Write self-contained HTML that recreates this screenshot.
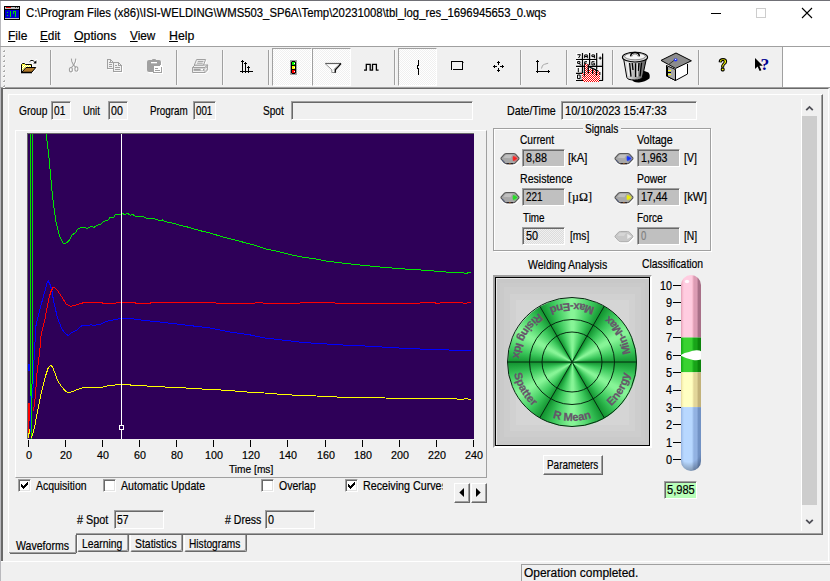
<!DOCTYPE html>
<html><head><meta charset="utf-8">
<style>
*{box-sizing:border-box;margin:0;padding:0}
html,body{width:830px;height:581px;overflow:hidden;background:#f0f0f0;font-family:"Liberation Sans",sans-serif;color:#000}
.a{position:absolute}
.t{position:absolute;white-space:nowrap;transform-origin:0 50%;color:#000;-webkit-text-stroke-width:0.2px}
.t u{text-decoration:underline;text-underline-offset:1px}
/* sunken edit box: outer dark/gray top-left, white bottom-right */
.sk{position:absolute;background:#f0f0f0;border:1px solid;border-color:#a0a0a0 #fff #fff #a0a0a0;box-shadow:inset 1px 1px 0 #696969}
.vs{position:absolute;width:2px;top:50px;height:36px;border-left:1px solid #a0a0a0;border-right:1px solid #fff}
.chk{position:absolute;width:13px;height:13px;background:#fff;border:1px solid;border-color:#a0a0a0 #fff #fff #a0a0a0;box-shadow:inset 1px 1px 0 #696969,inset -1px -1px 0 #e3e3e3}
.btn{position:absolute;background:#f0f0f0;border:1px solid;border-color:#fff #696969 #696969 #fff;box-shadow:inset -1px -1px 0 #a0a0a0}
.tab{position:absolute;background:#f0f0f0;border:1px solid;border-color:#f0f0f0 #696969 #696969 #fff;border-top:0;border-radius:0 0 2px 2px;box-shadow:inset -1px -1px 0 #a0a0a0}
.hatch{position:absolute;background:repeating-conic-gradient(#fff 0 25%,#f0f0f0 0 50%) 0 0/2px 2px;border:1px solid;border-color:#a0a0a0 #fff #fff #a0a0a0}
</style></head><body>
<!-- ===== title bar ===== -->
<div class="a" style="left:0;top:0;width:830px;height:46px;background:#fff"></div>
<div class="a" style="left:0;top:0;width:830px;height:1px;background:#707076"></div>
<div class="a" style="left:0;top:1px;width:1px;height:580px;background:#b9b9bd"></div>
<!-- app icon -->
<svg class="a" style="left:4px;top:6px" width="16" height="14" viewBox="0 0 16 14" shape-rendering="crispEdges">
<rect x="0" y="0" width="16" height="14" fill="#000"/><rect x="1" y="1" width="14" height="2" fill="#c0c0c0"/><rect x="2" y="1" width="5" height="1" fill="#e00000"/><rect x="11" y="1" width="1" height="1" fill="#404040"/><rect x="13" y="1" width="1" height="1" fill="#404040"/>
<rect x="1" y="4" width="14" height="8" fill="#0000d0"/><rect x="1" y="12" width="14" height="1" fill="#c0c0c0"/>
<rect x="3" y="6" width="1" height="1" fill="#00e000"/><rect x="3" y="9" width="1" height="1" fill="#00e000"/><rect x="6" y="5" width="1" height="6" fill="#00e000"/><rect x="9" y="5" width="3" height="1" fill="#00e000"/><rect x="11" y="5" width="1" height="6" fill="#00e000"/><rect x="9" y="6" width="1" height="2" fill="#00e000"/>
</svg>
<!-- caption buttons -->
<div class="a" style="left:711px;top:13px;width:10px;height:1px;background:#000"></div>
<div class="a" style="left:756px;top:8px;width:10px;height:10px;border:1px solid #cdcdcd"></div>
<svg class="a" style="left:801px;top:7px" width="12" height="12" viewBox="0 0 12 12"><path d="M1 1 L11 11 M11 1 L1 11" stroke="#000" stroke-width="1.1" fill="none"/></svg>
<div class="a" style="left:0;top:46px;width:830px;height:1px;background:#a0a0a0"></div>
<!-- ===== toolbar ===== -->
<div class="a" style="left:1px;top:47px;width:782px;height:40px;background:#f0f0f0"></div>
<div class="a" style="left:783px;top:47px;width:47px;height:40px;background:#fff"></div>
<div class="a" style="left:782px;top:47px;width:1px;height:40px;background:#a0a0a0"></div>
<div class="a" style="left:0;top:87px;width:830px;height:1px;background:#a0a0a0"></div>
<!--TB0-->
<svg class="a" style="left:2px;top:49px" width="5" height="40" viewBox="0 0 5 40" shape-rendering="crispEdges"><rect x="2" y="1" width="1" height="1" fill="#b4b4b4"/><rect x="1" y="2" width="2" height="1" fill="#a8a8a8"/><rect x="3" y="2" width="1" height="1" fill="#fafafa"/><rect x="1" y="3" width="2" height="1" fill="#fafafa"/><rect x="2" y="6" width="1" height="1" fill="#b4b4b4"/><rect x="1" y="7" width="2" height="1" fill="#a8a8a8"/><rect x="3" y="7" width="1" height="1" fill="#fafafa"/><rect x="1" y="8" width="2" height="1" fill="#fafafa"/><rect x="2" y="11" width="1" height="1" fill="#b4b4b4"/><rect x="1" y="12" width="2" height="1" fill="#a8a8a8"/><rect x="3" y="12" width="1" height="1" fill="#fafafa"/><rect x="1" y="13" width="2" height="1" fill="#fafafa"/><rect x="2" y="16" width="1" height="1" fill="#b4b4b4"/><rect x="1" y="17" width="2" height="1" fill="#a8a8a8"/><rect x="3" y="17" width="1" height="1" fill="#fafafa"/><rect x="1" y="18" width="2" height="1" fill="#fafafa"/><rect x="2" y="21" width="1" height="1" fill="#b4b4b4"/><rect x="1" y="22" width="2" height="1" fill="#a8a8a8"/><rect x="3" y="22" width="1" height="1" fill="#fafafa"/><rect x="1" y="23" width="2" height="1" fill="#fafafa"/><rect x="2" y="26" width="1" height="1" fill="#b4b4b4"/><rect x="1" y="27" width="2" height="1" fill="#a8a8a8"/><rect x="3" y="27" width="1" height="1" fill="#fafafa"/><rect x="1" y="28" width="2" height="1" fill="#fafafa"/><rect x="2" y="31" width="1" height="1" fill="#b4b4b4"/><rect x="1" y="32" width="2" height="1" fill="#a8a8a8"/><rect x="3" y="32" width="1" height="1" fill="#fafafa"/><rect x="1" y="33" width="2" height="1" fill="#fafafa"/><rect x="2" y="36" width="1" height="1" fill="#b4b4b4"/><rect x="1" y="37" width="2" height="1" fill="#a8a8a8"/><rect x="3" y="37" width="1" height="1" fill="#fafafa"/><rect x="1" y="38" width="2" height="1" fill="#fafafa"/></svg>
<div class="a" style="left:50px;top:50px;width:1px;height:35px;background:#a0a0a0"></div><div class="a" style="left:51px;top:50px;width:1px;height:35px;background:#f8f8f8"></div>
<div class="a" style="left:176px;top:50px;width:1px;height:35px;background:#a0a0a0"></div><div class="a" style="left:177px;top:50px;width:1px;height:35px;background:#f8f8f8"></div>
<div class="a" style="left:222px;top:50px;width:1px;height:35px;background:#a0a0a0"></div><div class="a" style="left:223px;top:50px;width:1px;height:35px;background:#f8f8f8"></div>
<div class="a" style="left:268px;top:50px;width:1px;height:35px;background:#a0a0a0"></div><div class="a" style="left:269px;top:50px;width:1px;height:35px;background:#f8f8f8"></div>
<div class="a" style="left:394px;top:50px;width:1px;height:35px;background:#a0a0a0"></div><div class="a" style="left:395px;top:50px;width:1px;height:35px;background:#f8f8f8"></div>
<div class="a" style="left:520px;top:50px;width:1px;height:35px;background:#a0a0a0"></div><div class="a" style="left:521px;top:50px;width:1px;height:35px;background:#f8f8f8"></div>
<div class="a" style="left:566px;top:50px;width:1px;height:35px;background:#a0a0a0"></div><div class="a" style="left:567px;top:50px;width:1px;height:35px;background:#f8f8f8"></div>
<div class="a" style="left:612px;top:50px;width:1px;height:35px;background:#a0a0a0"></div><div class="a" style="left:613px;top:50px;width:1px;height:35px;background:#f8f8f8"></div>
<div class="a" style="left:698px;top:50px;width:1px;height:35px;background:#a0a0a0"></div><div class="a" style="left:699px;top:50px;width:1px;height:35px;background:#f8f8f8"></div>
<div class="hatch" style="left:272px;top:48px;width:40px;height:38px"></div>
<div class="hatch" style="left:312px;top:48px;width:39px;height:38px"></div>
<div class="hatch" style="left:398px;top:48px;width:39px;height:38px"></div>
<svg class="a" style="left:20px;top:58px" width="18" height="16" viewBox="-1 -1 18 16">
<g stroke="#fff" stroke-width="2" fill="#fff" stroke-linejoin="round"><path d="M0.5 13.5V5.5L1.5 4.5H3.5L4.5 5.5H10.5V8.5H15.5L11 13.5Z"/><path d="M8.5 2.5Q11 -0.5 14 3.5"/><path d="M12 4.5h3.5v-3.5z"/></g>
<path d="M0.5 13.5V5.5L1.5 4.5H3.5L4.5 5.5H10.5V8.5" fill="#ffff30" stroke="#000" stroke-width="1"/>
<path d="M1 6h9v2.5H4.8L1 12.6Z" fill="#ffff30"/>
<g fill="#fff" shape-rendering="crispEdges"><rect x="2" y="6" width="1" height="1"/><rect x="4" y="6" width="1" height="1"/><rect x="6" y="6" width="1" height="1"/><rect x="8" y="6" width="1" height="1"/><rect x="1" y="7" width="1" height="1"/><rect x="3" y="7" width="1" height="1"/><rect x="5" y="7" width="1" height="1"/><rect x="7" y="7" width="1" height="1"/><rect x="9" y="7" width="1" height="1"/><rect x="2" y="8" width="1" height="1"/><rect x="4" y="8" width="1" height="1"/><rect x="1" y="9" width="1" height="1"/><rect x="3" y="9" width="1" height="1"/><rect x="2" y="10" width="1" height="1"/><rect x="1" y="11" width="1" height="1"/></g>
<path d="M0.5 13.5L5 8.5H14.8L10.6 13.5Z" fill="#b07828" stroke="#000" stroke-width="1" stroke-linejoin="miter"/>
<path d="M0 13.5H11" stroke="#000" stroke-width="1.6"/>
<path d="M8.6 2.6Q11 -0.2 13.8 3.2" fill="none" stroke="#000" stroke-width="1"/>
<path d="M12.2 4.5h3.2v-3.3z" fill="#000"/>
</svg>
<svg class="a" style="left:68px;top:58px" width="12" height="16" viewBox="0 0 12 16"><g transform="translate(1.6,1.2)" fill="none" stroke="#fff" stroke-width="1.1"><path d="M2.6 0.3 L3 3 L4.6 6.6 L7 9 M7 0.3 L6.6 3 L5 6.6 L2.6 9.2"/><ellipse cx="2.1" cy="11.3" rx="1.5" ry="2.2"/><ellipse cx="7.6" cy="10.6" rx="1.5" ry="2.2"/></g><g transform="translate(0.8,0.4)" fill="none" stroke="#a0a0a0" stroke-width="1.1"><path d="M2.6 0.3 L3 3 L4.6 6.6 L7 9 M7 0.3 L6.6 3 L5 6.6 L2.6 9.2"/><ellipse cx="2.1" cy="11.3" rx="1.5" ry="2.2"/><ellipse cx="7.6" cy="10.6" rx="1.5" ry="2.2"/></g></svg>
<svg class="a" style="left:107px;top:59px" width="17" height="15" viewBox="0 0 17 15" shape-rendering="crispEdges">
<g transform="translate(1,1)"><path d="M0.5 0.5h3l3 3v6h-6z" fill="none" stroke="#fff" stroke-width="1"/><path d="M3.5 0.5v3h3" fill="none" stroke="#fff" stroke-width="1"/><path d="M6.5 3.5h5l3 3v6h-8z" fill="none" stroke="#fff" stroke-width="1"/><path d="M11.5 3.5v3h3" fill="none" stroke="#fff" stroke-width="1"/></g>
<path d="M0.5 0.5h3l3 3v6h-6z" fill="#f0f0f0" stroke="#a0a0a0" stroke-width="1"/><path d="M3.5 0.5v3h3" fill="none" stroke="#a0a0a0" stroke-width="1"/><rect x="2" y="3" width="2" height="1" fill="#a0a0a0"/><rect x="2" y="5" width="3" height="1" fill="#a0a0a0"/><rect x="2" y="7" width="3" height="1" fill="#a0a0a0"/>
<path d="M6.5 3.5h5l3 3v6h-8z" fill="#f0f0f0" stroke="#a0a0a0" stroke-width="1"/><path d="M11.5 3.5v3h3" fill="none" stroke="#a0a0a0" stroke-width="1"/><rect x="8" y="6" width="2" height="1" fill="#a0a0a0"/><rect x="8" y="8" width="5" height="1" fill="#a0a0a0"/><rect x="8" y="10" width="5" height="1" fill="#a0a0a0"/>
</svg>
<svg class="a" style="left:147px;top:59px" width="17" height="15" viewBox="0 0 17 15">
<rect x="1" y="2" width="14" height="12.4" rx="2" fill="#fff"/>
<rect x="0" y="1" width="14" height="12" rx="2" fill="#a0a0a0"/><rect x="5" y="0" width="4" height="2" rx="1" fill="#a0a0a0"/>
<rect x="4" y="3" width="6" height="1.3" fill="#fff"/>
<g shape-rendering="crispEdges"><rect x="7" y="7" width="9" height="8" fill="#fff"/><rect x="6" y="6" width="9" height="8" fill="#a0a0a0"/><rect x="7" y="7" width="7" height="6" fill="#fff"/><rect x="13" y="6" width="2" height="2" fill="#fff"/><rect x="8" y="9" width="3" height="1" fill="#a0a0a0"/><rect x="8" y="11" width="5" height="1" fill="#a0a0a0"/></g>
</svg>
<svg class="a" style="left:191px;top:58px" width="19" height="17" viewBox="0 0 19 17">
<g transform="translate(1,1)" fill="none" stroke="#fff" stroke-width="1"><path d="M5.5 1.5h9l-2 5.2"/><path d="M1.5 14.5h12.5l2.6-2.8v-4.6"/></g>
<path d="M1.5 9.5L4 7H16.6L14 9.5Z" fill="#f0f0f0" stroke="#a0a0a0" stroke-width="1"/>
<path d="M5.6 1.5h9l-2.1 5.6h-9.2z" fill="#f0f0f0" stroke="#a0a0a0" stroke-width="1"/>
<path d="M6.8 3.4h5.6M6.1 5.2h5.6" stroke="#a0a0a0" stroke-width="1"/>
<path d="M1.5 9.5h12.5v5h-12.5z" fill="#f0f0f0" stroke="#a0a0a0" stroke-width="1"/>
<path d="M14 9.5L16.6 7V11.8L14 14.5" fill="#f0f0f0" stroke="#a0a0a0" stroke-width="1"/>
<rect x="2.6" y="10.6" width="10.4" height="2.2" fill="#a0a0a0"/>
<rect x="9.6" y="10.9" width="2.4" height="1.5" fill="#fff"/>
<path d="M14.8 10.4l1.4-1.4M14.8 12.6l1.4-1.4" stroke="#a0a0a0" stroke-width="0.9"/>
</svg>
<svg class="a" style="left:239px;top:59px" width="16" height="15" viewBox="0 0 16 15" shape-rendering="crispEdges" fill="#000">
<rect x="1" y="12" width="13" height="1"/>
<rect x="3" y="1" width="1" height="13"/><rect x="2" y="2" width="3" height="1"/>
<rect x="6" y="3" width="1" height="11"/><rect x="5" y="4" width="3" height="1"/>
<rect x="9" y="7" width="1" height="7"/><rect x="8" y="8" width="3" height="1"/>
</svg>
<svg class="a" style="left:290px;top:60px" width="7" height="15" viewBox="0 0 7 15" shape-rendering="crispEdges">
<rect x="0" y="0" width="7" height="15" fill="#a4a4a4"/><rect x="1" y="1" width="5" height="13" fill="#000"/>
<rect x="1" y="1" width="1" height="1" fill="#808080"/><rect x="5" y="1" width="1" height="1" fill="#808080"/><rect x="1" y="13" width="1" height="1" fill="#808080"/><rect x="5" y="13" width="1" height="1" fill="#808080"/>
<rect x="2" y="2" width="3" height="3" fill="#00f000"/><rect x="2" y="6" width="3" height="3" fill="#ffff00"/><rect x="2" y="10" width="3" height="3" fill="#ff0000"/>
<rect x="4" y="3" width="1" height="1" fill="#fff"/><rect x="4" y="7" width="1" height="1" fill="#fff"/><rect x="4" y="11" width="1" height="1" fill="#fff"/>
</svg>
<svg class="a" style="left:324px;top:62px" width="19" height="12" viewBox="0 0 19 12">
<path d="M1 1.5H17L11.5 7.6V10.6H7.8V7.6Z" fill="#fff"/>
<path d="M1 1.5H17" stroke="#606060" stroke-width="1.2"/>
<path d="M1.2 1.6L7.8 7.8V10.5H11" stroke="#909090" stroke-width="1" fill="none"/>
<path d="M17 1.6L11.3 7.8V10.8" stroke="#101010" stroke-width="1.5" fill="none"/>
<path d="M14.6 3.2L9.6 7.6" stroke="#a0a0a0" stroke-width="1"/>
</svg>
<svg class="a" style="left:363px;top:62px" width="17" height="10" viewBox="0 0 17 10">
<path d="M1 8.2H3.3V2.3H7.2V8.2H9.5V2.3H13.4V8.2H15.6" fill="none" stroke="#000" stroke-width="1.3"/></svg>
<svg class="a" style="left:415px;top:60px" width="6" height="15" viewBox="0 0 6 15" shape-rendering="crispEdges" fill="#000">
<rect x="3" y="0" width="1" height="6"/><rect x="2" y="5" width="1" height="4"/><rect x="3" y="8" width="1" height="7"/></svg>
<svg class="a" style="left:451px;top:61px" width="13" height="10" viewBox="0 0 13 10" shape-rendering="crispEdges" fill="#000">
<rect x="0" y="0" width="12" height="1"/><rect x="0" y="0" width="1" height="9"/><rect x="11" y="0" width="1" height="9"/><rect x="2" y="8" width="10" height="1"/><rect x="12" y="1" width="1" height="1" fill="#808080"/></svg>
<svg class="a" style="left:493px;top:61px" width="11" height="11" viewBox="0 0 11 11" shape-rendering="crispEdges" fill="#000">
<rect x="5" y="0" width="1" height="4"/><rect x="4" y="1" width="3" height="1"/>
<rect x="5" y="7" width="1" height="4"/><rect x="4" y="9" width="3" height="1"/>
<rect x="0" y="5" width="4" height="1"/><rect x="1" y="4" width="1" height="3"/>
<rect x="7" y="5" width="4" height="1"/><rect x="9" y="4" width="1" height="3"/>
</svg>
<svg class="a" style="left:535px;top:59px" width="16" height="15" viewBox="0 0 16 15">
<g shape-rendering="crispEdges" fill="#000"><rect x="2" y="1" width="1" height="13"/><rect x="1" y="2" width="3" height="1"/><rect x="1" y="12" width="14" height="1"/><rect x="13" y="11" width="1" height="3"/></g>
<path d="M6.5 9.5Q7 5.5 9.5 5.3L13.2 4.2" fill="none" stroke="#a8a8a8" stroke-width="1"/>
</svg>
<svg class="a" style="left:576px;top:53px" width="28" height="29" viewBox="0 0 28 29">
<defs><pattern id="rd" width="2" height="2" patternUnits="userSpaceOnUse"><rect width="2" height="2" fill="#fff"/><rect width="1" height="1" fill="#f00"/><rect x="1" y="1" width="1" height="1" fill="#f00"/></pattern>
<linearGradient id="kg" x1="0" y1="0" x2="1" y2="1"><stop offset="0" stop-color="#fff"/><stop offset="0.6" stop-color="#f4f4f4"/><stop offset="1" stop-color="#c8c8c8"/></linearGradient></defs>
<rect x="0" y="0" width="27" height="28" fill="#f6f6f6"/>
<g fill="url(#kg)"><rect x="0" y="0" width="6" height="6"/><rect x="7" y="0" width="6" height="6"/><rect x="14" y="0" width="6" height="6"/><rect x="0" y="7" width="6" height="6"/><rect x="7" y="7" width="6" height="6"/><rect x="14" y="7" width="6" height="6"/><rect x="0" y="14" width="6" height="6"/><rect x="0" y="21" width="6" height="6"/><rect x="21" y="0" width="5.5" height="13"/><rect x="21" y="14" width="5.5" height="13"/></g>
<g stroke="#000" stroke-width="1.2" fill="none"><path d="M0 6.5H20.6M0 13.4H27M0 20.3H8M0 27.5H27M6.5 0V27.5M13.6 0V12M20.7 0V16M26.6 0.4V27.5"/></g>
<g stroke="#000" stroke-width="1" fill="none" stroke-linejoin="miter"><path d="M1.4 1.7H4.4L2.6 5"/><path d="M8.7 5.2V1.9H11.3V5.2M8.7 3.5H11.3"/><path d="M18.4 5.2V1.9H15.9V3.6H18.4"/><path d="M1.6 8.6H3.9V10.4H1.6ZM3 10.4L4.8 12"/><path d="M11 8.7H8.7V12M8.7 10.3H10.6"/><path d="M18.5 8.7H15.9V11.9H18.5V10.3H17.2"/><path d="M2.3 15V19.2"/><path d="M1.5 22H4.1V25.6H1.5Z"/><path d="M24.2 3.6V6.6M22.7 5.1H25.7"/></g>
<path d="M8.5 12Q8.6 11 10.2 11Q11.8 11 11.9 12V15.6H15.6Q16.4 15.8 16.6 16.5H19.6Q20.2 16.9 20.4 17.9H22.8Q23.8 18.2 23.9 19.4V26L23 28.7H7L6 26V21.4Q6.3 20.2 7.4 20.2H8.5Z" fill="url(#rd)" shape-rendering="crispEdges"/>
<g stroke="#000" fill="none"><path d="M8.4 12V23.4" stroke-width="1"/><path d="M12.3 11.4V20.4" stroke-width="1.3"/><path d="M16.6 16.5V21" stroke-width="1.2"/><path d="M20.4 16.4V22.6" stroke-width="1.2"/><path d="M13.4 14.2L16.4 15.4L22.2 17.8" stroke-width="1.4"/><path d="M23.9 19V22" stroke-width="1"/></g>
</svg>
<svg class="a" style="left:621px;top:50px" width="30" height="33" viewBox="0 0 30 33">
<defs><linearGradient id="tg" x1="0" x2="1"><stop offset="0" stop-color="#e8e8e8"/><stop offset="0.35" stop-color="#c8c8c8"/><stop offset="0.7" stop-color="#8a8a8a"/><stop offset="1" stop-color="#5a5a5a"/></linearGradient></defs>
<path d="M11 29.5Q12 32.6 18 32.4Q24 32 28.4 28.4Q29.4 24.6 27.4 22.4L22 20.5Z" fill="#000"/>
<path d="M2.6 8.6L5.8 27.4Q6.4 30 13.4 30Q20.4 30 21.4 27.2L25.4 8.6Z" fill="url(#tg)" stroke="#000" stroke-width="1"/>
<g stroke="#000" stroke-width="1.3" fill="none"><path d="M8.6 13L10 26.6M11.2 13L12 20M14.6 13.2L14.6 27M18 13L17.2 21M20.6 12.6L19 26.4"/></g>
<g stroke="#fff" stroke-width="0.9" fill="none"><path d="M6.4 12.4L8 26M16.2 13.2V26.6"/></g>
<ellipse cx="14" cy="7.2" rx="12.6" ry="4.8" fill="#dcdcdc" stroke="#000" stroke-width="1.1"/>
<ellipse cx="14" cy="6.4" rx="10.4" ry="3.4" fill="#f6f6f6" stroke="#606060" stroke-width="0.7"/>
<path d="M9.6 6.4Q10 2.6 14 2.6Q18 2.6 18.4 6.4" fill="none" stroke="#000" stroke-width="1.5"/>
<path d="M11 6.4Q11.4 4 14 4Q16.6 4 17 6.4" fill="none" stroke="#909090" stroke-width="0.9"/>
</svg>
<svg class="a" style="left:660px;top:52px" width="33" height="30" viewBox="0 0 33 30">
<path d="M6.5 13.5V24L15.5 28.5L27.5 22V12" fill="#fff" stroke="#000" stroke-width="1"/>
<path d="M6.5 13.5V24L15.5 28.5V17.5Z" fill="#a8a8a8" stroke="#000" stroke-width="1"/>
<path d="M15.5 17.5V28.5" stroke="#000" stroke-width="1"/>
<path d="M1 8.4L16 1L31.4 8.8L15.6 16.4Z" fill="#8c8c8c" stroke="#000" stroke-width="1" stroke-linejoin="round"/>
<path d="M8 13L14.6 8" stroke="#303030" stroke-width="1"/>
<ellipse cx="15.6" cy="8" rx="1.9" ry="1.4" fill="#2030ff"/><rect x="15" y="7" width="1.2" height="0.9" fill="#fff"/>
<g shape-rendering="crispEdges"><rect x="7" y="15" width="1" height="9" fill="#000"/><rect x="8" y="18" width="3" height="1" fill="#ffff00"/><rect x="8" y="20" width="3" height="1" fill="#000"/><rect x="8" y="22" width="3" height="1" fill="#ffff00"/></g>
</svg>
<svg class="a" style="left:717px;top:57px" width="12" height="16" viewBox="0 0 12 16">
<path d="M2.2 4.8Q2.4 1.6 6 1.6Q9.6 1.6 9.6 4.6Q9.6 6.4 7.6 7.6Q6.6 8.4 6.6 10.2H4.6Q4.4 8 5.8 6.8Q7.2 5.8 7.2 4.6Q7.2 3.4 6 3.4Q4.6 3.4 4.4 5Z" fill="#ffff00" stroke="#000" stroke-width="1.1" stroke-linejoin="round"/>
<rect x="4.3" y="11.3" width="2.8" height="2.6" rx="0.8" fill="#ffff00" stroke="#000" stroke-width="1.1"/>
</svg>
<svg class="a" style="left:754px;top:57px" width="18" height="16" viewBox="0 0 18 16">
<path d="M1 1V12L3.6 9.6L5.6 14L7.4 13.2L5.4 8.8H8.8Z" fill="#000"/>
<text x="6.6" y="13" font-family="Liberation Serif, serif" font-weight="bold" font-size="17.5" fill="#000090">?</text>
</svg>
<!--TB1-->
<!-- ===== client area ===== -->
<div class="a" style="left:1px;top:88px;width:828px;height:473px;background:#f0f0f0;border-left:2px solid #696969;border-top:1px solid #696969;border-right:1px solid #fff"></div>
<!-- tab page frame -->
<div class="a" style="left:8px;top:94px;width:815px;height:441px;border:1px solid;border-color:#fff #696969 #696969 #fff;box-shadow:inset -1px -1px 0 #a0a0a0"></div>
<!-- scrollbar -->
<div class="a" style="left:801px;top:99px;width:1px;height:432px;background:#fff"></div>
<div class="a" style="left:802px;top:116px;width:15px;height:389px;background:#cdcdcd"></div>
<svg class="a" style="left:805px;top:104px" width="9" height="8" viewBox="0 0 9 8"><path d="M1.2 6.2 L4.5 2.9 L7.8 6.2" stroke="#505058" stroke-width="1.8" fill="none"/></svg>
<svg class="a" style="left:805px;top:518px" width="9" height="8" viewBox="0 0 9 8"><path d="M1.2 1.8 L4.5 5.1 L7.8 1.8" stroke="#505058" stroke-width="1.8" fill="none"/></svg>
<!-- fields row -->
<div class="sk" style="left:51px;top:101px;width:20px;height:19px"></div>
<div class="sk" style="left:108px;top:101px;width:20px;height:19px"></div>
<div class="sk" style="left:193px;top:101px;width:23px;height:19px"></div>
<div class="sk" style="left:291px;top:101px;width:182px;height:19px"></div>
<div class="sk" style="left:561px;top:101px;width:136px;height:19px"></div>
<!-- chart -->
<div class="a" style="left:15px;top:130px;width:472px;height:348px;border:1px solid;border-color:#fff #a0a0a0 #a0a0a0 #fff"></div>
<div class="a" style="left:27px;top:133px;width:447px;height:306px;background:#696969"></div>
<svg class="a" style="left:28px;top:134px;background:#2e0058" width="446" height="305" viewBox="0 0 446 305">
<g shape-rendering="crispEdges"><rect x="2" y="0" width="1" height="250" fill="#00e000"/><rect x="4" y="0" width="1" height="250" fill="#00e000"/><rect x="2" y="250" width="2" height="16" fill="#00e000"/><rect x="3" y="262" width="1" height="43" fill="#00e000"/>
<rect x="0" y="230" width="2" height="7" fill="#0000ff"/><rect x="2" y="262" width="1" height="36" fill="#0000ff"/>
<rect x="0" y="269" width="1" height="30" fill="#ff0000"/><rect x="1" y="269" width="1" height="18" fill="#ff0000"/><rect x="0" y="299" width="1" height="5" fill="#ffff00"/><rect x="1" y="295" width="1" height="5" fill="#ffff00"/></g>
<polyline points="4.5,264.0 5.2,250.0 5.8,232.0 6.4,216.0 7.1,206.9 7.7,193.0 9.6,184.3 12.1,174.2 14.6,165.4 17.1,156.6 19.0,149.0 20.3,147.2 22.2,151.0 24.0,156.6 25.3,165.4 27.2,174.2 29.7,184.3 33.5,194.3 36.6,198.7 40.4,201.6 43.5,198.7 48.5,196.2 53.6,191.8 60.5,191.5 63.0,190.5 65.5,191.5 72.4,190.3 77.4,188.0 81.2,186.5 86.2,185.8 91.9,184.5 96.0,184.2 104.0,184.8 112.0,185.9 128.0,187.6 144.6,189.5 162.0,191.6 180.8,193.8 202.0,198.0 220.5,200.6 236.4,203.9 254.0,206.0 270.9,208.0 288.0,209.4 305.3,210.4 322.0,211.4 339.8,212.1 357.0,213.2 374.2,214.2 392.0,215.0 408.7,215.6 427.0,216.2 443.0,216.6" fill="none" stroke="#0000ff" stroke-width="1" shape-rendering="crispEdges"/>
<polyline points="5.5,277.0 6.7,268.7 7.7,257.5 9.0,238.7 10.6,226.0 12.1,213.6 12.1,206.9 14.6,194.3 17.1,184.3 19.0,174.2 20.9,164.2 22.8,157.9 24.9,153.8 26.5,153.5 29.1,156.0 32.2,160.4 35.3,165.4 37.9,169.8 41.0,171.7 43.5,172.3 47.3,171.1 52.3,169.6 56.7,168.4 73.7,168.4 74.9,169.4 87.5,169.4 88.7,168.4 107.0,168.4 108.0,169.4 122.0,169.4 123.0,168.6 172.0,168.8 202.0,169.2 227.0,169.2 228.0,168.4 234.0,168.4 235.0,169.2 272.0,169.2 273.0,168.4 317.0,169.2 392.0,169.2 393.0,168.4 412.0,169.2 413.0,168.4 432.0,168.6 438.0,169.4 440.0,168.2 443.0,168.8" fill="none" stroke="#ff0000" stroke-width="1" shape-rendering="crispEdges"/>
<polyline points="3.4,304.0 4.6,300.8 5.9,295.7 7.2,289.8 8.4,283.0 9.7,277.2 10.2,273.9 12.7,261.3 15.2,251.3 17.8,241.2 20.3,233.7 22.8,231.2 24.9,233.7 27.2,239.9 29.7,246.9 33.5,252.5 37.2,256.9 40.4,259.0 44.8,257.5 49.8,255.3 56.1,253.5 62.4,253.5 74.9,253.1 81.2,251.5 91.2,250.6 96.0,250.6 112.0,251.6 126.6,252.4 144.0,253.4 162.7,254.2 180.0,255.4 198.8,256.3 220.5,258.1 236.4,259.0 254.0,260.4 270.9,261.4 288.0,262.0 305.3,262.4 312.0,263.4 322.0,263.0 339.8,263.8 357.0,264.0 374.2,264.2 382.0,265.0 387.0,264.2 408.7,264.5 427.0,264.8 434.0,265.6 438.0,264.6 443.0,265.5" fill="none" stroke="#ffff00" stroke-width="1" shape-rendering="crispEdges"/>
<polyline points="18.4,0.0 19.0,6.5 20.0,15.0 21.2,26.0 22.3,38.0 23.4,50.0 24.4,61.0 25.3,68.5 26.2,76.0 27.2,82.4 28.4,90.0 30.3,97.4 32.2,103.7 35.3,109.4 37.2,109.4 40.4,107.5 42.3,104.3 43.8,101.2 47.3,98.7 50.4,94.3 54.8,93.4 59.2,94.3 63.0,92.4 66.1,93.4 68.6,91.4 72.4,90.5 75.5,87.4 80.0,86.1 81.8,83.6 85.6,83.4 87.5,80.5 90.0,81.1 92.5,80.1 95.0,79.8 97.0,80.6 99.5,79.4 102.0,81.2 105.0,80.6 108.0,82.6 112.0,83.0 115.0,82.4 118.0,84.2 124.6,84.8 129.0,85.2 132.0,87.0 135.0,85.8 137.0,87.8 143.0,88.6 149.7,90.6 156.0,92.2 162.0,93.6 168.0,95.6 174.7,97.3 181.0,98.6 187.2,100.6 193.0,102.4 199.8,104.1 206.0,105.8 212.3,107.4 218.0,109.0 224.8,110.6 231.0,112.8 237.4,114.9 244.0,116.2 250.0,117.4 256.0,119.0 262.4,120.6 269.0,122.0 275.0,123.2 281.0,124.0 287.5,124.9 296.0,126.7 306.0,128.0 317.0,129.4 327.4,130.5 338.0,131.6 348.0,132.6 358.7,133.6 369.0,134.4 380.0,135.2 390.0,135.8 400.0,136.6 411.0,137.4 421.4,138.3 432.0,138.6 438.0,139.2 442.7,138.6" fill="none" stroke="#00e800" stroke-width="1" shape-rendering="crispEdges"/>
<g shape-rendering="crispEdges"><rect x="93" y="0" width="1" height="305" fill="#fff"/><rect x="91.5" y="291.5" width="4" height="4" fill="#2e0058" stroke="#fff" stroke-width="1"/></g>
</svg>
<div class="a" style="left:28px;top:440px;width:1px;height:7px;background:#000"></div>
<div class="a" style="left:65px;top:440px;width:1px;height:7px;background:#000"></div>
<div class="a" style="left:102px;top:440px;width:1px;height:7px;background:#000"></div>
<div class="a" style="left:139px;top:440px;width:1px;height:7px;background:#000"></div>
<div class="a" style="left:176px;top:440px;width:1px;height:7px;background:#000"></div>
<div class="a" style="left:213px;top:440px;width:1px;height:7px;background:#000"></div>
<div class="a" style="left:250px;top:440px;width:1px;height:7px;background:#000"></div>
<div class="a" style="left:287px;top:440px;width:1px;height:7px;background:#000"></div>
<div class="a" style="left:325px;top:440px;width:1px;height:7px;background:#000"></div>
<div class="a" style="left:362px;top:440px;width:1px;height:7px;background:#000"></div>
<div class="a" style="left:399px;top:440px;width:1px;height:7px;background:#000"></div>
<div class="a" style="left:436px;top:440px;width:1px;height:7px;background:#000"></div>
<div class="a" style="left:473px;top:440px;width:1px;height:7px;background:#000"></div>
<!-- signals -->
<div class="a" style="left:493px;top:128px;width:218px;height:123px;border:1px solid #a0a0a0;box-shadow:inset 1px 1px 0 #fff,1px 1px 0 #fff"></div>
<div class="a" style="left:583px;top:126px;width:38px;height:8px;background:#f0f0f0"></div>
<svg class="a" style="left:500px;top:152px" width="21" height="14" viewBox="0 0 21 14"><g transform="translate(10 6.5) scale(0.98 0.93) translate(-10 -6.3)"><path d="M1 5.6Q0.6 6.3 1 7L4.4 11Q5.2 11.9 6.6 11.9H13.2Q14.6 11.9 15.4 11L19 7Q19.4 6.3 19 5.6L15.6 1.7Q14.8 0.9 13.6 0.9H6.4Q5.2 0.9 4.4 1.7Z" transform="translate(0.5,1.1)" fill="#fff" stroke="#fff" stroke-width="1.8"/><path d="M1 5.6Q0.6 6.3 1 7L4.4 11Q5.2 11.9 6.6 11.9H13.2Q14.6 11.9 15.4 11L19 7Q19.4 6.3 19 5.6L15.6 1.7Q14.8 0.9 13.6 0.9H6.4Q5.2 0.9 4.4 1.7Z" fill="#a8a8a8" stroke="#585858" stroke-width="1.1"/><path d="M3.2 5.6L5.6 2.6H12.4L10.4 6Z" fill="#c0c0c0"/><path d="M2.2 8.2L4.6 11" stroke="#405080" stroke-width="1.1" stroke-dasharray="1.2 1" fill="none"/><path d="M6.4 11.9H13.2" stroke="#181018" stroke-width="1.1" fill="none"/><path d="M9.2 11.9H10.6" stroke="#c07020" stroke-width="1.1"/><ellipse cx="15" cy="6.3" rx="2.9" ry="3.1" fill="#ff2020" opacity="0.35"/><path d="M13.6 4.2L17 6.3L13.6 8.4Z" fill="#ff2020" stroke="#ff2020" stroke-width="0.8" stroke-linejoin="round"/></g></svg>
<div class="sk" style="left:522px;top:149px;width:43px;height:18px;background:#c0c0c0"></div>
<svg class="a" style="left:614px;top:152px" width="21" height="14" viewBox="0 0 21 14"><g transform="translate(10 6.5) scale(0.98 0.93) translate(-10 -6.3)"><path d="M1 5.6Q0.6 6.3 1 7L4.4 11Q5.2 11.9 6.6 11.9H13.2Q14.6 11.9 15.4 11L19 7Q19.4 6.3 19 5.6L15.6 1.7Q14.8 0.9 13.6 0.9H6.4Q5.2 0.9 4.4 1.7Z" transform="translate(0.5,1.1)" fill="#fff" stroke="#fff" stroke-width="1.8"/><path d="M1 5.6Q0.6 6.3 1 7L4.4 11Q5.2 11.9 6.6 11.9H13.2Q14.6 11.9 15.4 11L19 7Q19.4 6.3 19 5.6L15.6 1.7Q14.8 0.9 13.6 0.9H6.4Q5.2 0.9 4.4 1.7Z" fill="#a8a8a8" stroke="#585858" stroke-width="1.1"/><path d="M3.2 5.6L5.6 2.6H12.4L10.4 6Z" fill="#c0c0c0"/><path d="M2.2 8.2L4.6 11" stroke="#405080" stroke-width="1.1" stroke-dasharray="1.2 1" fill="none"/><path d="M6.4 11.9H13.2" stroke="#181018" stroke-width="1.1" fill="none"/><path d="M9.2 11.9H10.6" stroke="#c07020" stroke-width="1.1"/><ellipse cx="15" cy="6.3" rx="2.9" ry="3.1" fill="#1030ff" opacity="0.35"/><path d="M13.6 4.2L17 6.3L13.6 8.4Z" fill="#1030ff" stroke="#1030ff" stroke-width="0.8" stroke-linejoin="round"/></g></svg>
<div class="sk" style="left:637px;top:149px;width:43px;height:18px;background:#c0c0c0"></div>
<svg class="a" style="left:500px;top:191px" width="21" height="14" viewBox="0 0 21 14"><g transform="translate(10 6.5) scale(0.98 0.93) translate(-10 -6.3)"><path d="M1 5.6Q0.6 6.3 1 7L4.4 11Q5.2 11.9 6.6 11.9H13.2Q14.6 11.9 15.4 11L19 7Q19.4 6.3 19 5.6L15.6 1.7Q14.8 0.9 13.6 0.9H6.4Q5.2 0.9 4.4 1.7Z" transform="translate(0.5,1.1)" fill="#fff" stroke="#fff" stroke-width="1.8"/><path d="M1 5.6Q0.6 6.3 1 7L4.4 11Q5.2 11.9 6.6 11.9H13.2Q14.6 11.9 15.4 11L19 7Q19.4 6.3 19 5.6L15.6 1.7Q14.8 0.9 13.6 0.9H6.4Q5.2 0.9 4.4 1.7Z" fill="#a8a8a8" stroke="#585858" stroke-width="1.1"/><path d="M3.2 5.6L5.6 2.6H12.4L10.4 6Z" fill="#c0c0c0"/><path d="M2.2 8.2L4.6 11" stroke="#405080" stroke-width="1.1" stroke-dasharray="1.2 1" fill="none"/><path d="M6.4 11.9H13.2" stroke="#181018" stroke-width="1.1" fill="none"/><path d="M9.2 11.9H10.6" stroke="#c07020" stroke-width="1.1"/><ellipse cx="15" cy="6.3" rx="2.9" ry="3.1" fill="#20e020" opacity="0.35"/><path d="M13.6 4.2L17 6.3L13.6 8.4Z" fill="#20e020" stroke="#20e020" stroke-width="0.8" stroke-linejoin="round"/></g></svg>
<div class="sk" style="left:522px;top:188px;width:43px;height:18px;background:#c0c0c0"></div>
<svg class="a" style="left:614px;top:191px" width="21" height="14" viewBox="0 0 21 14"><g transform="translate(10 6.5) scale(0.98 0.93) translate(-10 -6.3)"><path d="M1 5.6Q0.6 6.3 1 7L4.4 11Q5.2 11.9 6.6 11.9H13.2Q14.6 11.9 15.4 11L19 7Q19.4 6.3 19 5.6L15.6 1.7Q14.8 0.9 13.6 0.9H6.4Q5.2 0.9 4.4 1.7Z" transform="translate(0.5,1.1)" fill="#fff" stroke="#fff" stroke-width="1.8"/><path d="M1 5.6Q0.6 6.3 1 7L4.4 11Q5.2 11.9 6.6 11.9H13.2Q14.6 11.9 15.4 11L19 7Q19.4 6.3 19 5.6L15.6 1.7Q14.8 0.9 13.6 0.9H6.4Q5.2 0.9 4.4 1.7Z" fill="#a8a8a8" stroke="#585858" stroke-width="1.1"/><path d="M3.2 5.6L5.6 2.6H12.4L10.4 6Z" fill="#c0c0c0"/><path d="M2.2 8.2L4.6 11" stroke="#405080" stroke-width="1.1" stroke-dasharray="1.2 1" fill="none"/><path d="M6.4 11.9H13.2" stroke="#181018" stroke-width="1.1" fill="none"/><path d="M9.2 11.9H10.6" stroke="#c07020" stroke-width="1.1"/><ellipse cx="15" cy="6.3" rx="2.9" ry="3.1" fill="#f0f000" opacity="0.35"/><path d="M13.6 4.2L17 6.3L13.6 8.4Z" fill="#f0f000" stroke="#f0f000" stroke-width="0.8" stroke-linejoin="round"/></g></svg>
<div class="sk" style="left:637px;top:188px;width:43px;height:18px;background:#c0c0c0"></div>
<div class="sk" style="left:522px;top:227px;width:43px;height:18px;background:repeating-conic-gradient(#f0f0f0 0 25%,#dcdcdc 0 50%) 0 0/2px 2px"></div>
<svg class="a" style="left:614px;top:230px" width="21" height="14" viewBox="0 0 21 14"><g transform="translate(10 6.5) scale(0.98 0.93) translate(-10 -6.3)"><path d="M1 5.6Q0.6 6.3 1 7L4.4 11Q5.2 11.9 6.6 11.9H13.2Q14.6 11.9 15.4 11L19 7Q19.4 6.3 19 5.6L15.6 1.7Q14.8 0.9 13.6 0.9H6.4Q5.2 0.9 4.4 1.7Z" transform="translate(0.6,1)" fill="#fff" stroke="#fff" stroke-width="1.6"/><path d="M1 5.6Q0.6 6.3 1 7L4.4 11Q5.2 11.9 6.6 11.9H13.2Q14.6 11.9 15.4 11L19 7Q19.4 6.3 19 5.6L15.6 1.7Q14.8 0.9 13.6 0.9H6.4Q5.2 0.9 4.4 1.7Z" fill="#c8c8c8" stroke="#a8a8a8" stroke-width="1"/><path d="M3.4 5.4L5.6 2.6H12L10 5.8Z" fill="#d6d6d6"/><path d="M13.4 3.4L17.6 6.2L13.4 9Z" fill="#ececec"/></g></svg>
<div class="sk" style="left:637px;top:227px;width:43px;height:18px;background:#c0c0c0"></div>
<!-- analysis -->
<div class="a" style="left:493px;top:275px;width:159px;height:173px;border:2px solid;border-color:#a0a0a0 #fff #fff #a0a0a0"></div>
<div class="a" style="left:495px;top:277px;width:155px;height:169px;border:1px solid #000;background:#c8c8c8;box-shadow:inset 1px 1px 0 #e8e8e8"></div>
<div class="a" style="left:500px;top:283px;width:145px;height:158px;background:#cacaca"></div>
<div class="a" style="left:504px;top:287px;width:137px;height:150px;background:#cdcdcd"></div>
<div class="a" style="left:510px;top:294px;width:125px;height:137px;background:#d1d1d1"></div>
<div class="a" style="left:516px;top:300px;width:113px;height:125px;background:#d5d5d5"></div>
<div class="a" style="left:507.5px;top:297.5px;width:129.0px;height:129.0px;border-radius:50%;background:conic-gradient(from -30deg at 50% 50%, #129430 0deg, #3cc85c 12deg, #86f496 28deg, #86f496 32deg, #3cc85c 48deg, #129430 60deg, #129430 60deg, #3cc85c 72deg, #86f496 88deg, #86f496 92deg, #3cc85c 108deg, #129430 120deg, #129430 120deg, #3cc85c 132deg, #86f496 148deg, #86f496 152deg, #3cc85c 168deg, #129430 180deg, #129430 180deg, #3cc85c 192deg, #86f496 208deg, #86f496 212deg, #3cc85c 228deg, #129430 240deg, #129430 240deg, #3cc85c 252deg, #86f496 268deg, #86f496 272deg, #3cc85c 288deg, #129430 300deg, #129430 300deg, #3cc85c 312deg, #86f496 328deg, #86f496 332deg, #3cc85c 348deg, #129430 360deg)"></div>
<svg class="a" style="left:502px;top:292px" width="140" height="140" viewBox="-70 -70 140 140">
<g fill="none" stroke="#062810" stroke-width="1"><circle r="64.5"/><circle r="42.5"/><circle r="30"/>
<line x1="-64.50" y1="-0.00" x2="64.50" y2="0.00"/>
<line x1="-32.25" y1="-55.86" x2="32.25" y2="55.86"/>
<line x1="32.25" y1="-55.86" x2="-32.25" y2="55.86"/>
</g>
<defs>
<path id="p0" d="M-50.03 31.27 A59.0 59.0 0 0 0 50.03 31.27"/>
<path id="p1" d="M2.06 58.96 A59.0 59.0 0 0 0 52.09 -27.70"/>
<path id="p2" d="M52.09 27.70 A59.0 59.0 0 0 0 2.06 -58.96"/>
<path id="p3" d="M50.03 -31.27 A59.0 59.0 0 0 0 -50.03 -31.27"/>
<path id="p4" d="M-2.06 -58.96 A59.0 59.0 0 0 0 -52.09 27.70"/>
<path id="p5" d="M-52.09 -27.70 A59.0 59.0 0 0 0 -2.06 58.96"/>
</defs>
<text font-family="Liberation Sans, sans-serif" font-weight="bold" font-size="11.2" fill="#66566a" stroke="#66566a" stroke-width="0.25" text-anchor="middle"><textPath href="#p0" startOffset="50%">R Mean</textPath></text>
<text font-family="Liberation Sans, sans-serif" font-weight="bold" font-size="11.2" fill="#66566a" stroke="#66566a" stroke-width="0.25" text-anchor="middle"><textPath href="#p1" startOffset="50%">Energy</textPath></text>
<text font-family="Liberation Sans, sans-serif" font-weight="bold" font-size="11.2" fill="#66566a" stroke="#66566a" stroke-width="0.25" text-anchor="middle"><textPath href="#p2" startOffset="50%">Min-Max</textPath></text>
<text font-family="Liberation Sans, sans-serif" font-weight="bold" font-size="11.2" fill="#66566a" stroke="#66566a" stroke-width="0.25" text-anchor="middle"><textPath href="#p3" startOffset="50%">Max-End</textPath></text>
<text font-family="Liberation Sans, sans-serif" font-weight="bold" font-size="11.2" fill="#66566a" stroke="#66566a" stroke-width="0.25" text-anchor="middle"><textPath href="#p4" startOffset="50%">Rising Idx</textPath></text>
<text font-family="Liberation Sans, sans-serif" font-weight="bold" font-size="11.2" fill="#66566a" stroke="#66566a" stroke-width="0.25" text-anchor="middle"><textPath href="#p5" startOffset="50%">Spatter</textPath></text>
</svg>
<div class="btn" style="left:543px;top:455px;width:60px;height:20px"></div>
<svg class="a" style="left:681px;top:275px" width="20" height="196" viewBox="0 0 20 196">
<defs><clipPath id="tc"><rect x="0" y="0" width="20" height="196" rx="10" ry="10"/></clipPath>
<linearGradient id="sh" x1="0" x2="1" y1="0" y2="0"><stop offset="0" stop-color="#000" stop-opacity="0.08"/><stop offset="0.08" stop-color="#000" stop-opacity="0.0"/><stop offset="0.14" stop-color="#fff" stop-opacity="0.28"/><stop offset="0.5" stop-color="#fff" stop-opacity="0.22"/><stop offset="0.58" stop-color="#fff" stop-opacity="0.0"/><stop offset="0.62" stop-color="#000" stop-opacity="0.1"/><stop offset="0.78" stop-color="#000" stop-opacity="0.14"/><stop offset="0.84" stop-color="#000" stop-opacity="0.28"/><stop offset="1" stop-color="#000" stop-opacity="0.36"/></linearGradient><linearGradient id="gp" x1="0" x2="1" y1="0" y2="0"><stop offset="0" stop-color="#dc9cb4"/><stop offset="0.07" stop-color="#f6b8cc"/><stop offset="0.15" stop-color="#ffcce0"/><stop offset="0.52" stop-color="#ffcce0"/><stop offset="0.6" stop-color="#f6b8cc"/><stop offset="0.64" stop-color="#dc9cb4"/><stop offset="0.8" stop-color="#dc9cb4"/><stop offset="0.86" stop-color="#a87088"/><stop offset="1" stop-color="#a87088"/></linearGradient><linearGradient id="gg" x1="0" x2="1" y1="0" y2="0"><stop offset="0" stop-color="#18a418"/><stop offset="0.07" stop-color="#22bc22"/><stop offset="0.15" stop-color="#3ad232"/><stop offset="0.52" stop-color="#3ad232"/><stop offset="0.6" stop-color="#22bc22"/><stop offset="0.64" stop-color="#18a418"/><stop offset="0.8" stop-color="#18a418"/><stop offset="0.86" stop-color="#0c840c"/><stop offset="1" stop-color="#0c840c"/></linearGradient><linearGradient id="gy" x1="0" x2="1" y1="0" y2="0"><stop offset="0" stop-color="#e2d69a"/><stop offset="0.07" stop-color="#f8f2b2"/><stop offset="0.15" stop-color="#ffffc2"/><stop offset="0.52" stop-color="#ffffc2"/><stop offset="0.6" stop-color="#f8f2b2"/><stop offset="0.64" stop-color="#e2d69a"/><stop offset="0.8" stop-color="#e2d69a"/><stop offset="0.86" stop-color="#c2b27a"/><stop offset="1" stop-color="#c2b27a"/></linearGradient><linearGradient id="gb" x1="0" x2="1" y1="0" y2="0"><stop offset="0" stop-color="#92b2e2"/><stop offset="0.07" stop-color="#a8c8f2"/><stop offset="0.15" stop-color="#b8d8ff"/><stop offset="0.52" stop-color="#b8d8ff"/><stop offset="0.6" stop-color="#a8c8f2"/><stop offset="0.64" stop-color="#92b2e2"/><stop offset="0.8" stop-color="#92b2e2"/><stop offset="0.86" stop-color="#7292c4"/><stop offset="1" stop-color="#7292c4"/></linearGradient><radialGradient id="bt" cx="0.4" cy="0" r="1"><stop offset="0.55" stop-color="#000" stop-opacity="0"/><stop offset="1" stop-color="#000" stop-opacity="0.3"/></radialGradient></defs>
<g clip-path="url(#tc)"><rect x="0" y="0" width="20" height="62.5" fill="url(#gp)"/><rect x="0" y="62.5" width="20" height="34.8" fill="url(#gg)"/><rect x="0" y="97.3" width="20" height="34.8" fill="url(#gy)"/><rect x="0" y="132.1" width="20" height="64" fill="url(#gb)"/>

<rect x="0" y="176" width="20" height="20" fill="url(#bt)"/><ellipse cx="6" cy="6.5" rx="2.2" ry="1.8" fill="#fff" opacity="0.85"/></g>
<path d="M-0.5 80.4Q3 77.6 8 77Q12 75 16 75.2Q19 75.4 20 76.2V84.6Q16 85.6 12 85Q5 83.6 -0.5 80.4Z" fill="#fff"/>
</svg>
<div class="a" style="left:673px;top:459px;width:8px;height:1px;background:#000"></div>
<div class="a" style="left:673px;top:442px;width:8px;height:1px;background:#000"></div>
<div class="a" style="left:673px;top:424px;width:8px;height:1px;background:#000"></div>
<div class="a" style="left:673px;top:407px;width:8px;height:1px;background:#000"></div>
<div class="a" style="left:673px;top:390px;width:8px;height:1px;background:#000"></div>
<div class="a" style="left:673px;top:372px;width:8px;height:1px;background:#000"></div>
<div class="a" style="left:673px;top:355px;width:8px;height:1px;background:#000"></div>
<div class="a" style="left:673px;top:337px;width:8px;height:1px;background:#000"></div>
<div class="a" style="left:673px;top:320px;width:8px;height:1px;background:#000"></div>
<div class="a" style="left:673px;top:302px;width:8px;height:1px;background:#000"></div>
<div class="a" style="left:673px;top:285px;width:8px;height:1px;background:#000"></div>
<div class="sk" style="left:664px;top:481px;width:33px;height:18px;background:#b8ffb8"></div>
<!-- bottom -->
<div class="chk" style="left:18px;top:479px"></div><svg class="a" style="left:21px;top:482px" width="7" height="7" viewBox="0 0 7 7" shape-rendering="crispEdges"><path d="M0 2h1v3h-1zM1 3h1v3h-1zM2 4h1v3h-1zM3 3h1v3h-1zM4 2h1v3h-1zM5 1h1v3h-1zM6 0h1v3h-1z" fill="#000"/></svg>
<div class="chk" style="left:103px;top:479px"></div>
<div class="chk" style="left:261px;top:479px"></div>
<div class="chk" style="left:345px;top:479px"></div><svg class="a" style="left:348px;top:482px" width="7" height="7" viewBox="0 0 7 7" shape-rendering="crispEdges"><path d="M0 2h1v3h-1zM1 3h1v3h-1zM2 4h1v3h-1zM3 3h1v3h-1zM4 2h1v3h-1zM5 1h1v3h-1zM6 0h1v3h-1z" fill="#000"/></svg>
<div class="btn" style="left:454px;top:483px;width:16px;height:20px"></div>
<div class="btn" style="left:471px;top:483px;width:16px;height:20px"></div>
<svg class="a" style="left:459px;top:488px" width="5" height="9" viewBox="0 0 5 9"><path d="M5 0L0.3 4.5L5 9Z" fill="#000"/></svg>
<svg class="a" style="left:476px;top:488px" width="5" height="9" viewBox="0 0 5 9"><path d="M0 0L4.7 4.5L0 9Z" fill="#000"/></svg>
<div class="sk" style="left:114px;top:510px;width:50px;height:19px"></div>
<div class="sk" style="left:265px;top:510px;width:50px;height:19px"></div>
<div class="tab" style="left:77px;top:535px;width:52px;height:17px"></div>
<div class="tab" style="left:130px;top:535px;width:53px;height:17px"></div>
<div class="tab" style="left:184px;top:535px;width:63px;height:17px"></div>
<div class="a" style="left:9px;top:531px;width:67px;height:23px;background:#f0f0f0"></div>
<div class="a" style="left:8px;top:531px;width:1px;height:22px;background:#fff"></div>
<div class="a" style="left:10px;top:553px;width:66px;height:1px;background:#696969"></div>
<div class="a" style="left:9px;top:552px;width:67px;height:1px;background:#a0a0a0"></div>
<div class="a" style="left:76px;top:535px;width:1px;height:18px;background:#696969"></div>
<div class="a" style="left:75px;top:535px;width:1px;height:17px;background:#a0a0a0"></div>
<!-- ===== status bar ===== -->
<div class="a" style="left:1px;top:561px;width:829px;height:1px;background:#fff"></div>
<div class="a" style="left:521px;top:564px;width:309px;height:17px;border-left:1px solid #a0a0a0;border-top:1px solid #a0a0a0"></div>
<div class="t" style="left:25.9px;top:5.8px;font-size:12px;line-height:14px;transform:scaleX(0.9432);">C:\Program Files (x86)\ISI-WELDING\WMS503_SP6A\Temp\20231008\tbl_log_res_1696945653_0.wqs</div>
<div class="t" style="left:7.9px;top:28.8px;font-size:12px;line-height:14px;transform:scaleX(0.9969);"><u>F</u>ile</div>
<div class="t" style="left:39.9px;top:28.8px;font-size:12px;line-height:14px;transform:scaleX(0.9805);"><u>E</u>dit</div>
<div class="t" style="left:73.9px;top:28.8px;font-size:12px;line-height:14px;transform:scaleX(1.0224);"><u>O</u>ptions</div>
<div class="t" style="left:129.9px;top:28.8px;font-size:12px;line-height:14px;transform:scaleX(0.9801);"><u>V</u>iew</div>
<div class="t" style="left:168.9px;top:28.8px;font-size:12px;line-height:14px;transform:scaleX(1.0248);"><u>H</u>elp</div>
<div class="t" style="left:523.9px;top:565.8px;font-size:12px;line-height:14px;transform:scaleX(0.9962);">Operation completed.</div>
<div class="t" style="left:18.9px;top:103.7px;font-size:12.4px;line-height:14px;transform:scaleX(0.8218);">Group</div>
<div class="t" style="left:54.4px;top:103.7px;font-size:12.4px;line-height:14px;transform:scaleX(0.8190);">01</div>
<div class="t" style="left:82.9px;top:103.7px;font-size:12.4px;line-height:14px;transform:scaleX(0.7620);">Unit</div>
<div class="t" style="left:111.4px;top:103.7px;font-size:12.4px;line-height:14px;transform:scaleX(0.8553);">00</div>
<div class="t" style="left:149.9px;top:103.7px;font-size:12.4px;line-height:14px;transform:scaleX(0.7955);">Program</div>
<div class="t" style="left:196.4px;top:103.7px;font-size:12.4px;line-height:14px;transform:scaleX(0.7879);">001</div>
<div class="t" style="left:262.9px;top:103.7px;font-size:12.4px;line-height:14px;transform:scaleX(0.8157);">Spot</div>
<div class="t" style="left:507.4px;top:103.7px;font-size:12.4px;line-height:14px;transform:scaleX(0.8606);">Date/Time</div>
<div class="t" style="left:564.9px;top:103.7px;font-size:12.4px;line-height:14px;transform:scaleX(0.8953);">10/10/2023 15:47:33</div>
<div class="t" style="left:585.4px;top:121.7px;font-size:12.4px;line-height:14px;transform:scaleX(0.8194);">Signals</div>
<div class="t" style="left:519.5px;top:132.7px;font-size:12.4px;line-height:14px;transform:scaleX(0.8227);">Current</div>
<div class="t" style="left:637.1px;top:132.7px;font-size:12.4px;line-height:14px;transform:scaleX(0.8659);">Voltage</div>
<div class="t" style="left:525.6px;top:150.7px;font-size:12.4px;line-height:14px;transform:scaleX(0.8663);">8,88</div>
<div class="t" style="left:567.9px;top:150.7px;font-size:12.4px;line-height:14px;transform:scaleX(0.9036);">[kA]</div>
<div class="t" style="left:640.7px;top:150.7px;font-size:12.4px;line-height:14px;transform:scaleX(0.8544);">1,963</div>
<div class="t" style="left:684.4px;top:150.7px;font-size:12.4px;line-height:14px;transform:scaleX(0.8445);">[V]</div>
<div class="t" style="left:519.9px;top:171.7px;font-size:12.4px;line-height:14px;transform:scaleX(0.8532);">Resistence</div>
<div class="t" style="left:636.6px;top:171.7px;font-size:12.4px;line-height:14px;transform:scaleX(0.8427);">Power</div>
<div class="t" style="left:525.6px;top:189.7px;font-size:12.4px;line-height:14px;transform:scaleX(0.8024);">221</div>
<div class="t" style="left:568.3px;top:189.7px;font-size:12.4px;line-height:14px;transform:scaleX(0.9712);font-family:Liberation Serif,serif;">[µΩ]</div>
<div class="t" style="left:640.7px;top:189.7px;font-size:12.4px;line-height:14px;transform:scaleX(0.8544);">17,44</div>
<div class="t" style="left:684.4px;top:189.7px;font-size:12.4px;line-height:14px;transform:scaleX(0.9201);">[kW]</div>
<div class="t" style="left:522.9px;top:210.7px;font-size:12.4px;line-height:14px;transform:scaleX(0.7977);">Time</div>
<div class="t" style="left:636.6px;top:210.7px;font-size:12.4px;line-height:14px;transform:scaleX(0.8079);">Force</div>
<div class="t" style="left:525.6px;top:228.7px;font-size:12.4px;line-height:14px;transform:scaleX(0.8770);">50</div>
<div class="t" style="left:569.9px;top:228.7px;font-size:12.4px;line-height:14px;transform:scaleX(0.8246);">[ms]</div>
<div class="t" style="left:640.9px;top:228.7px;font-size:12.4px;line-height:14px;transform:scaleX(0.7674);color:#808080;">0</div>
<div class="t" style="left:684.4px;top:228.7px;font-size:12.4px;line-height:14px;transform:scaleX(0.8331);">[N]</div>
<div class="t" style="left:528.4px;top:257.5px;font-size:12.4px;line-height:14px;transform:scaleX(0.8476);">Welding Analysis</div>
<div class="t" style="left:641.5px;top:256.9px;font-size:12.4px;line-height:14px;transform:scaleX(0.8370);">Classification</div>
<div class="t" style="left:546.9px;top:457.7px;font-size:12.4px;line-height:14px;transform:scaleX(0.8010);">Parameters</div>
<div class="t" style="left:666.9px;top:483.3px;font-size:12.4px;line-height:14px;transform:scaleX(0.8931);">5,985</div>
<div class="t" style="left:666.1px;top:452.9px;font-size:11.9px;line-height:14px;transform:scaleX(0.9208);">0</div>
<div class="t" style="left:666.1px;top:435.5px;font-size:11.9px;line-height:14px;transform:scaleX(0.9208);">1</div>
<div class="t" style="left:666.1px;top:418.1px;font-size:11.9px;line-height:14px;transform:scaleX(0.9208);">2</div>
<div class="t" style="left:666.1px;top:400.7px;font-size:11.9px;line-height:14px;transform:scaleX(0.9208);">3</div>
<div class="t" style="left:666.1px;top:383.3px;font-size:11.9px;line-height:14px;transform:scaleX(0.9208);">4</div>
<div class="t" style="left:666.1px;top:365.9px;font-size:11.9px;line-height:14px;transform:scaleX(0.9208);">5</div>
<div class="t" style="left:666.1px;top:348.5px;font-size:11.9px;line-height:14px;transform:scaleX(0.9208);">6</div>
<div class="t" style="left:666.1px;top:331.1px;font-size:11.9px;line-height:14px;transform:scaleX(0.9208);">7</div>
<div class="t" style="left:666.1px;top:313.7px;font-size:11.9px;line-height:14px;transform:scaleX(0.9208);">8</div>
<div class="t" style="left:666.1px;top:296.3px;font-size:11.9px;line-height:14px;transform:scaleX(0.9208);">9</div>
<div class="t" style="left:660.3px;top:278.9px;font-size:11.9px;line-height:14px;transform:scaleX(0.8992);">10</div>
<div class="t" style="left:25.5px;top:449.1px;font-size:11.3px;line-height:13px;transform:scaleX(0.9687);">0</div>
<div class="t" style="left:59.6px;top:449.1px;font-size:11.3px;line-height:13px;transform:scaleX(0.9461);">20</div>
<div class="t" style="left:96.6px;top:449.1px;font-size:11.3px;line-height:13px;transform:scaleX(0.9461);">40</div>
<div class="t" style="left:133.6px;top:449.1px;font-size:11.3px;line-height:13px;transform:scaleX(0.9461);">60</div>
<div class="t" style="left:170.6px;top:449.1px;font-size:11.3px;line-height:13px;transform:scaleX(0.9461);">80</div>
<div class="t" style="left:204.6px;top:449.1px;font-size:11.3px;line-height:13px;transform:scaleX(0.9491);">100</div>
<div class="t" style="left:241.6px;top:449.1px;font-size:11.3px;line-height:13px;transform:scaleX(0.9491);">120</div>
<div class="t" style="left:278.6px;top:449.1px;font-size:11.3px;line-height:13px;transform:scaleX(0.9491);">140</div>
<div class="t" style="left:316.6px;top:449.1px;font-size:11.3px;line-height:13px;transform:scaleX(0.9491);">160</div>
<div class="t" style="left:353.6px;top:449.1px;font-size:11.3px;line-height:13px;transform:scaleX(0.9491);">180</div>
<div class="t" style="left:390.6px;top:449.1px;font-size:11.3px;line-height:13px;transform:scaleX(0.9491);">200</div>
<div class="t" style="left:427.6px;top:449.1px;font-size:11.3px;line-height:13px;transform:scaleX(0.9491);">220</div>
<div class="t" style="left:464.6px;top:449.1px;font-size:11.3px;line-height:13px;transform:scaleX(0.9491);">240</div>
<div class="t" style="left:229.4px;top:462.6px;font-size:11.3px;line-height:13px;transform:scaleX(0.9009);">Time [ms]</div>
<div class="t" style="left:35.9px;top:478.7px;font-size:12.4px;line-height:14px;transform:scaleX(0.8428);">Acquisition</div>
<div class="t" style="left:120.9px;top:478.7px;font-size:12.4px;line-height:14px;transform:scaleX(0.8538);">Automatic Update</div>
<div class="t" style="left:278.6px;top:478.7px;font-size:12.4px;line-height:14px;transform:scaleX(0.8481);">Overlap</div>
<div class="t" style="left:363.3px;top:478.7px;font-size:12.4px;line-height:14px;transform:scaleX(0.8640);clip-path:inset(-5px 5px -5px 0);">Receiving Curves</div>
<div class="t" style="left:76.9px;top:512.7px;font-size:12.4px;line-height:14px;transform:scaleX(0.8736);"># Spot</div>
<div class="t" style="left:117.2px;top:512.7px;font-size:12.4px;line-height:14px;transform:scaleX(0.8408);">57</div>
<div class="t" style="left:225.1px;top:512.7px;font-size:12.4px;line-height:14px;transform:scaleX(0.8501);"># Dress</div>
<div class="t" style="left:267.9px;top:512.7px;font-size:12.4px;line-height:14px;transform:scaleX(0.8688);">0</div>
<div class="t" style="left:16.2px;top:538.5px;font-size:12.4px;line-height:14px;transform:scaleX(0.8520);">Waveforms</div>
<div class="t" style="left:82.3px;top:536.8px;font-size:12.4px;line-height:14px;transform:scaleX(0.8355);">Learning</div>
<div class="t" style="left:134.9px;top:536.8px;font-size:12.4px;line-height:14px;transform:scaleX(0.8411);">Statistics</div>
<div class="t" style="left:189.2px;top:536.8px;font-size:12.4px;line-height:14px;transform:scaleX(0.8188);">Histograms</div>
</body></html>
